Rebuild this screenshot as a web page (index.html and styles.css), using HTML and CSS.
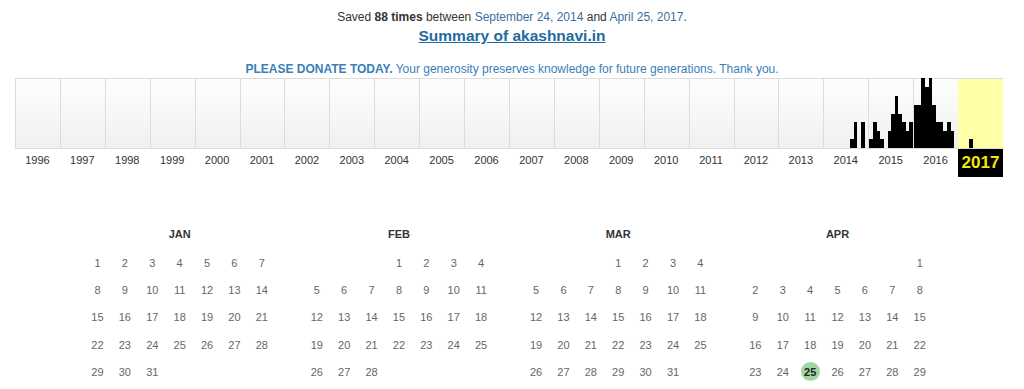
FILE: index.html
```html
<!DOCTYPE html>
<html lang="en">
<head>
    <meta charset="UTF-8">
    <title>Wayback Machine - akashnavi.in</title>
    <link rel="stylesheet" href="styles.css">
</head>
<body>
    <div class="captures">
        <p class="saved">Saved <b>88 times</b> between <a href="#">September 24, 2014</a> and <a href="#">April 25, 2017</a>.</p>
        <p class="summary"><a href="#">Summary of akashnavi.in</a></p>
    </div>

    <p class="donate"><b>PLEASE DONATE TODAY.</b> Your generosity preserves knowledge for future generations. Thank you.</p>

    <!-- sparkline: one column per year, one slot per month -->
    <div class="sparkline">
        <div class="year"><div class="chart"></div><div class="year-label">1996</div></div>
        <div class="year"><div class="chart"></div><div class="year-label">1997</div></div>
        <div class="year"><div class="chart"></div><div class="year-label">1998</div></div>
        <div class="year"><div class="chart"></div><div class="year-label">1999</div></div>
        <div class="year"><div class="chart"></div><div class="year-label">2000</div></div>
        <div class="year"><div class="chart"></div><div class="year-label">2001</div></div>
        <div class="year"><div class="chart"></div><div class="year-label">2002</div></div>
        <div class="year"><div class="chart"></div><div class="year-label">2003</div></div>
        <div class="year"><div class="chart"></div><div class="year-label">2004</div></div>
        <div class="year"><div class="chart"></div><div class="year-label">2005</div></div>
        <div class="year"><div class="chart"></div><div class="year-label">2006</div></div>
        <div class="year"><div class="chart"></div><div class="year-label">2007</div></div>
        <div class="year"><div class="chart"></div><div class="year-label">2008</div></div>
        <div class="year"><div class="chart"></div><div class="year-label">2009</div></div>
        <div class="year"><div class="chart"></div><div class="year-label">2010</div></div>
        <div class="year"><div class="chart"></div><div class="year-label">2011</div></div>
        <div class="year"><div class="chart"></div><div class="year-label">2012</div></div>
        <div class="year"><div class="chart"></div><div class="year-label">2013</div></div>
        <div class="year">
            <div class="chart">
                <span class="m"></span><span class="m"></span><span class="m"></span><span class="m"></span>
                <span class="m"></span><span class="m"></span><span class="m"></span>
                <span class="m" style="height:9px"></span>
                <span class="m" style="height:26px"></span>
                <span class="m"></span>
                <span class="m" style="height:26px"></span>
                <span class="m"></span>
            </div>
            <div class="year-label">2014</div>
        </div>
        <div class="year">
            <div class="chart">
                <span class="m" style="height:9px"></span>
                <span class="m" style="height:26px"></span>
                <span class="m" style="height:17px"></span>
                <span class="m" style="height:9px"></span>
                <span class="m"></span>
                <span class="m" style="height:17px"></span>
                <span class="m" style="height:34px"></span>
                <span class="m" style="height:52px"></span>
                <span class="m" style="height:34px"></span>
                <span class="m" style="height:26px"></span>
                <span class="m" style="height:17px"></span>
                <span class="m" style="height:26px"></span>
            </div>
            <div class="year-label">2015</div>
        </div>
        <div class="year">
            <div class="chart">
                <span class="m" style="height:43px"></span>
                <span class="m" style="height:43px"></span>
                <span class="m" style="height:70px"></span>
                <span class="m" style="height:61px"></span>
                <span class="m" style="height:70px"></span>
                <span class="m" style="height:43px"></span>
                <span class="m" style="height:26px"></span>
                <span class="m" style="height:26px"></span>
                <span class="m" style="height:17px"></span>
                <span class="m" style="height:26px"></span>
                <span class="m" style="height:17px"></span>
                <span class="m"></span>
            </div>
            <div class="year-label">2016</div>
        </div>
        <div class="year current">
            <div class="chart">
                <span class="m"></span><span class="m"></span><span class="m"></span>
                <span class="m" style="height:9px"></span>
                <span class="m"></span><span class="m"></span><span class="m"></span><span class="m"></span>
                <span class="m"></span><span class="m"></span><span class="m"></span><span class="m"></span>
            </div>
            <div class="year-label">2017</div>
        </div>
    </div>

    <!-- calendar -->
    <div class="calendar">
        <div class="month">
            <div class="month-title">JAN</div>
            <div class="days">
                <span>1</span><span>2</span><span>3</span><span>4</span><span>5</span><span>6</span><span>7</span>
                <span>8</span><span>9</span><span>10</span><span>11</span><span>12</span><span>13</span><span>14</span>
                <span>15</span><span>16</span><span>17</span><span>18</span><span>19</span><span>20</span><span>21</span>
                <span>22</span><span>23</span><span>24</span><span>25</span><span>26</span><span>27</span><span>28</span>
                <span>29</span><span>30</span><span>31</span>
            </div>
        </div>
        <div class="month">
            <div class="month-title">FEB</div>
            <div class="days">
                <span class="start-4">1</span><span>2</span><span>3</span><span>4</span>
                <span>5</span><span>6</span><span>7</span><span>8</span><span>9</span><span>10</span><span>11</span>
                <span>12</span><span>13</span><span>14</span><span>15</span><span>16</span><span>17</span><span>18</span>
                <span>19</span><span>20</span><span>21</span><span>22</span><span>23</span><span>24</span><span>25</span>
                <span>26</span><span>27</span><span>28</span>
            </div>
        </div>
        <div class="month">
            <div class="month-title">MAR</div>
            <div class="days">
                <span class="start-4">1</span><span>2</span><span>3</span><span>4</span>
                <span>5</span><span>6</span><span>7</span><span>8</span><span>9</span><span>10</span><span>11</span>
                <span>12</span><span>13</span><span>14</span><span>15</span><span>16</span><span>17</span><span>18</span>
                <span>19</span><span>20</span><span>21</span><span>22</span><span>23</span><span>24</span><span>25</span>
                <span>26</span><span>27</span><span>28</span><span>29</span><span>30</span><span>31</span>
            </div>
        </div>
        <div class="month">
            <div class="month-title">APR</div>
            <div class="days">
                <span class="start-7">1</span>
                <span>2</span><span>3</span><span>4</span><span>5</span><span>6</span><span>7</span><span>8</span>
                <span>9</span><span>10</span><span>11</span><span>12</span><span>13</span><span>14</span><span>15</span>
                <span>16</span><span>17</span><span>18</span><span>19</span><span>20</span><span>21</span><span>22</span>
                <span>23</span><span>24</span><span class="captured"><b>25</b></span><span>26</span><span>27</span><span>28</span><span>29</span>
            </div>
        </div>
    </div>
</body>
</html>
```

FILE: styles.css
```css
* {
    margin: 0;
    padding: 0;
    box-sizing: border-box;
}

body {
    font-family: "Liberation Sans", Arial, sans-serif;
    color: #333;
    background-color: #fff;
}

a {
    color: #3b6fa3;
    text-decoration: none;
}

.captures {
    text-align: center;
    padding-top: 10px;
}

.saved {
    font-size: 12px;
    line-height: 14px;
}

.summary {
    margin-top: 3px;
    font-size: 15.5px;
    line-height: 18px;
    font-weight: bold;
}

.summary a {
    color: #1f6a9e;
    text-decoration: underline;
}

.donate {
    margin-top: 17px;
    text-align: center;
    font-size: 12px;
    line-height: 14px;
    color: #3a80b7;
}

/* sparkline */
.sparkline {
    display: flex;
    width: 988px;
    margin: 2px 0 0 15px;
}

.year {
    flex: 1;
}

.chart {
    display: flex;
    align-items: flex-end;
    height: 71px;
    border-top: 1px solid #dcdcdc;
    border-bottom: 1px solid #dcdcdc;
    border-left: 1px solid #dcdcdc;
    background: linear-gradient(#fefefe, #f0f0f0);
}

.chart .m {
    flex: 1;
    background-color: #000;
}

.year-label {
    padding-top: 5px;
    font-size: 11px;
    line-height: 13px;
    text-align: center;
    color: #333;
}

.current .chart {
    background: #ffffa8;
    border-left: none;
}

.current .year-label {
    height: 28px;
    padding-top: 0;
    font-size: 17px;
    line-height: 28px;
    font-weight: bold;
    background-color: #000;
    color: #f5e900;
}

/* calendar */
.calendar {
    display: flex;
    margin: 49px 0 0 70px;
}

.month {
    width: 219.3px;
}

.month-title {
    text-align: center;
    font-size: 11px;
    line-height: 16px;
    font-weight: bold;
    color: #333;
}

.days {
    display: grid;
    grid-template-columns: repeat(7, 27.4px);
    grid-auto-rows: 27.3px;
    justify-content: center;
    margin-top: 7px;
    font-size: 11px;
    color: #666;
}

.days span {
    display: flex;
    align-items: center;
    justify-content: center;
}

.days .start-4 {
    grid-column-start: 4;
}

.days .start-7 {
    grid-column-start: 7;
}

.days .captured b {
    display: flex;
    align-items: center;
    justify-content: center;
    width: 19px;
    height: 19px;
    border-radius: 50%;
    background-color: #a3d4a3;
    color: #222;
}
```
